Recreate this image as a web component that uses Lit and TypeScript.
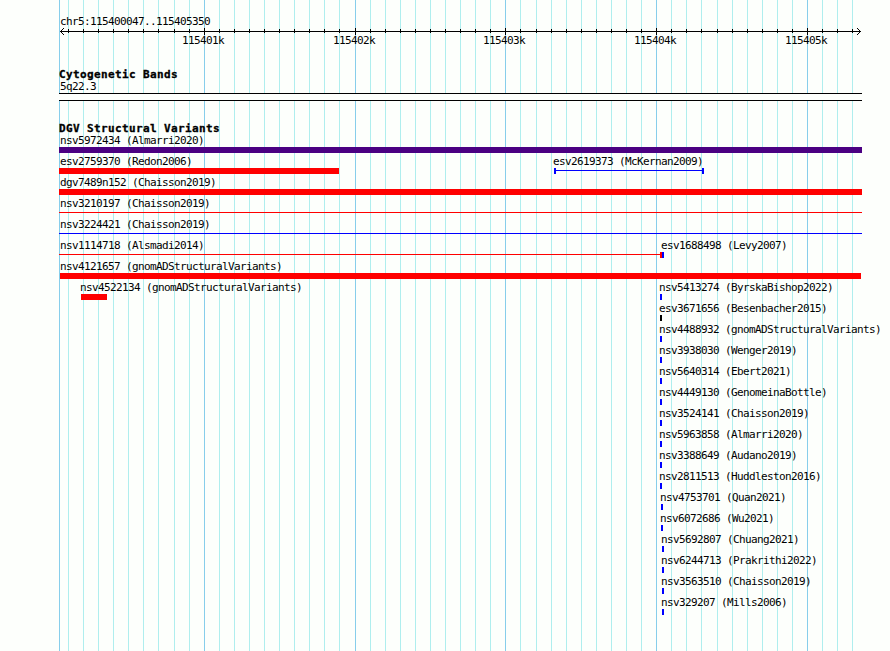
import { LitElement, html, svg, css } from "lit";
import { customElement, property } from "lit/decorators.js";

type Shape = "bar" | "line" | "range" | "deletion";

interface Feature {
  name: string;
  x: number;
  width: number;
  color: string;
  shape?: Shape;
  labelX?: number;
}

const START = 115400047;
const END = 115405350;
const LEFT = 60;
const SCALE = 800 / (END - START + 1);

const RED = "#ff0000";
const BLUE = "#0000ff";

const toX = (pos: number) => Math.round(LEFT + (pos - START) * SCALE);

const TICKS = Array.from({ length: 53 }, (_, i) => {
  const pos = 115400100 + i * 100;
  return { pos, x: toX(pos), major: pos % 1000 === 0 };
});

const ROWS: Feature[][] = [
  [{ name: "nsv5972434 (Almarri2020)", x: 59, width: 803, color: "#4b0082" }],
  [
    { name: "esv2759370 (Redon2006)", x: 59, width: 280, color: RED },
    { name: "esv2619373 (McKernan2009)", x: 554, width: 150, color: BLUE, shape: "range", labelX: 553 },
  ],
  [{ name: "dgv7489n152 (Chaisson2019)", x: 59, width: 803, color: RED }],
  [{ name: "nsv3210197 (Chaisson2019)", x: 59, width: 803, color: RED, shape: "line" }],
  [{ name: "nsv3224421 (Chaisson2019)", x: 59, width: 803, color: BLUE, shape: "line" }],
  [
    { name: "nsv1114718 (Alsmadi2014)", x: 59, width: 603, color: RED, shape: "deletion" },
    { name: "esv1688498 (Levy2007)", x: 662, width: 2, color: BLUE, labelX: 661 },
  ],
  [{ name: "nsv4121657 (gnomADStructuralVariants)", x: 60, width: 801, color: RED }],
  [
    { name: "nsv4522134 (gnomADStructuralVariants)", x: 81, width: 26, color: RED, labelX: 80 },
    { name: "nsv5413274 (ByrskaBishop2022)", x: 660, width: 2, color: BLUE },
  ],
  [{ name: "esv3671656 (Besenbacher2015)", x: 660, width: 2, color: "#000000" }],
  [{ name: "nsv4488932 (gnomADStructuralVariants)", x: 660, width: 2, color: BLUE }],
  [{ name: "nsv3938030 (Wenger2019)", x: 660, width: 2, color: BLUE }],
  [{ name: "nsv5640314 (Ebert2021)", x: 660, width: 2, color: BLUE }],
  [{ name: "nsv4449130 (GenomeinaBottle)", x: 660, width: 2, color: BLUE }],
  [{ name: "nsv3524141 (Chaisson2019)", x: 660, width: 2, color: BLUE }],
  [{ name: "nsv5963858 (Almarri2020)", x: 660, width: 2, color: BLUE }],
  [{ name: "nsv3388649 (Audano2019)", x: 660, width: 2, color: BLUE }],
  [{ name: "nsv2811513 (Huddleston2016)", x: 660, width: 2, color: BLUE }],
  [{ name: "nsv4753701 (Quan2021)", x: 661, width: 2, color: BLUE }],
  [{ name: "nsv6072686 (Wu2021)", x: 661, width: 2, color: BLUE }],
  [{ name: "nsv5692807 (Chuang2021)", x: 662, width: 2, color: BLUE }],
  [{ name: "nsv6244713 (Prakrithi2022)", x: 662, width: 2, color: BLUE }],
  [{ name: "nsv3563510 (Chaisson2019)", x: 662, width: 2, color: BLUE }],
  [{ name: "nsv329207 (Mills2006)", x: 662, width: 2, color: BLUE }],
];

@customElement("coordinate-ruler")
class CoordinateRuler extends LitElement {
  static styles = css`
    :host {
      display: block;
    }

    .region {
      height: 12px;
      line-height: 12px;
      padding-left: 60px;
    }

    .axis {
      display: block;
      width: 890px;
      height: 23px;
    }

    text {
      font: inherit;
      letter-spacing: inherit;
    }
  `;

  render() {
    return html`
      <div class="region">chr5:${START}..${END}</div>
      <svg class="axis" viewBox="0 28 890 23" shape-rendering="crispEdges">
        <rect x="60" y="31" width="801" height="1" />
        ${[-3, -2, -1, 1, 2, 3].map(
          (d) => svg`
            <rect x=${60 + Math.abs(d)} y=${31 + d} width="1" height="1" />
            <rect x=${860 - Math.abs(d)} y=${31 + d} width="1" height="1" />
          `
        )}
        ${TICKS.map(
          (t) => svg`<rect x=${t.x} y=${t.major ? 28 : 29} width="1" height=${t.major ? 7 : 4} />`
        )}
        ${TICKS.filter((t) => t.major).map(
          (t) => svg`<text x=${t.x - 22} y="44">${t.pos / 1000}k</text>`
        )}
      </svg>
    `;
  }
}

@customElement("variant-feature")
class VariantFeature extends LitElement {
  @property({ attribute: false }) feature!: Feature;

  static styles = css`
    :host {
      display: block;
    }

    .label {
      height: 12px;
      line-height: 12px;
      white-space: pre;
    }

    .glyph {
      display: block;
      height: 6px;
    }
  `;

  renderShape({ shape, width }: Feature) {
    switch (shape) {
      case "line":
        return svg`<rect y="2" width=${width} height="1" />`;
      case "range":
        return svg`
          <rect y="2" width=${width} height="1" />
          <rect width="2" height="6" />
          <rect x=${width - 2} width="2" height="6" />
        `;
      case "deletion":
        return svg`
          <rect y="2" width=${width} height="1" />
          <rect x=${width - 2} width="2" height="6" />
        `;
      default:
        return svg`<rect width=${width} height="6" />`;
    }
  }

  render() {
    const f = this.feature;
    const labelX = f.labelX ?? (f.x < 100 ? 60 : f.x - 1);
    return html`
      <div class="label" style="margin-left: ${labelX}px">${f.name}</div>
      <svg
        class="glyph"
        width=${f.width}
        height="6"
        fill=${f.color}
        shape-rendering="crispEdges"
        style="margin-left: ${f.x}px"
      >
        ${this.renderShape(f)}
      </svg>
    `;
  }
}

@customElement("app-root")
class AppRoot extends LitElement {
  static styles = css`
    :host {
      display: block;
      position: relative;
      box-sizing: border-box;
      width: 890px;
      height: 651px;
      padding-top: 16px;
      overflow: hidden;
      background: #fdfffc;
      color: #000;
      font: 11px "DejaVu Sans Mono", monospace;
      letter-spacing: -0.62px;
    }

    .grid {
      position: absolute;
      top: 0;
      left: 0;
      width: 890px;
      height: 651px;
    }

    .minor {
      fill: #afeeee;
    }

    .major {
      fill: #87ceeb;
    }

    .content {
      position: relative;
    }

    .title {
      height: 12px;
      line-height: 12px;
      padding-left: 59px;
      font-weight: bold;
      letter-spacing: 0.38px;
      -webkit-text-stroke: 0.3px #000;
    }

    .cytoband {
      padding-top: 18px;
    }

    .band-name {
      height: 12px;
      line-height: 12px;
      padding-left: 60px;
    }

    .band {
      box-sizing: border-box;
      width: 803px;
      height: 8px;
      margin-left: 59px;
      border: solid #000;
      border-width: 1px 0;
      background: #fdfffc;
    }

    .variants {
      padding-top: 22px;
    }

    .row {
      display: grid;
      height: 21px;
    }

    .row > * {
      grid-area: 1 / 1;
    }
  `;

  render() {
    return html`
      <svg class="grid" shape-rendering="crispEdges">
        <rect class="major" x="59" width="1" height="651" />
        ${TICKS.map(
          (t) => svg`<rect class=${t.major ? "major" : "minor"} x=${t.x} width="1" height="651" />`
        )}
      </svg>
      <div class="content">
        <coordinate-ruler></coordinate-ruler>
        <section class="cytoband">
          <div class="title">Cytogenetic Bands</div>
          <div class="band-name">5q22.3</div>
          <div class="band"></div>
        </section>
        <section class="variants">
          <div class="title">DGV Structural Variants</div>
          ${ROWS.map(
            (row) => html`
              <div class="row">
                ${row.map((f) => html`<variant-feature .feature=${f}></variant-feature>`)}
              </div>
            `
          )}
        </section>
      </div>
    `;
  }
}
